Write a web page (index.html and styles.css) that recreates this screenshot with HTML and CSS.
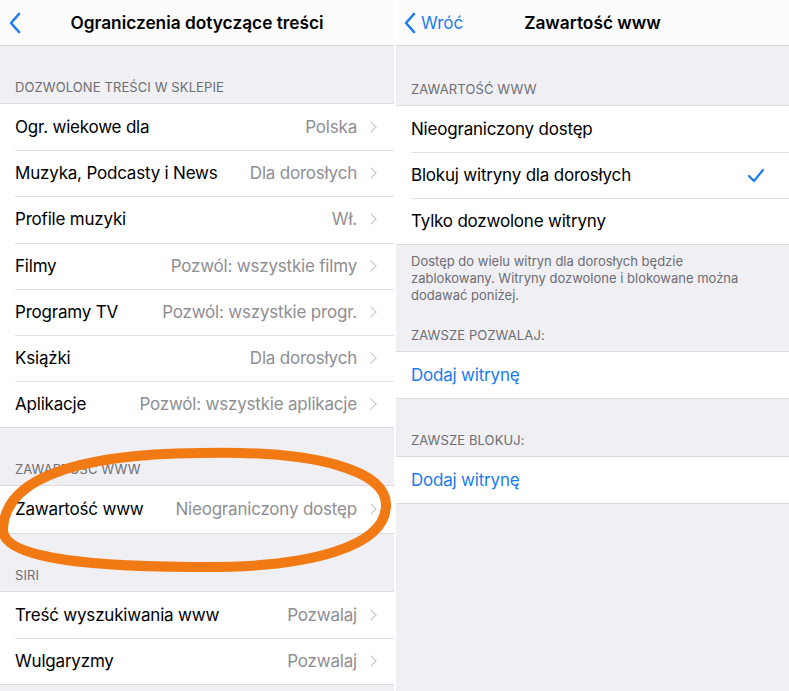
FILE: index.html
```html
<!DOCTYPE html>
<html lang="pl">
<head>
<meta charset="utf-8">
<link rel="stylesheet" href="styles.css">
</head>
<body>
<div class="screens">
  <section class="panel left">
    <header class="nav">
      <svg class="back" width="12" height="22" viewBox="0 0 12 22"><path d="M10 2 L2 11 L10 20" fill="none" stroke="#1a7cf0" stroke-width="2.6" stroke-linecap="round" stroke-linejoin="round"/></svg>
      <h1 class="title">Ograniczenia dotyczące treści</h1>
    </header>
    <div class="hdr">DOZWOLONE TREŚCI W SKLEPIE</div>
    <ul class="list">
      <li class="row"><span class="label">Ogr. wiekowe dla</span><span class="value">Polska</span><span class="chev"></span></li>
      <li class="row"><span class="label">Muzyka, Podcasty i News</span><span class="value">Dla dorosłych</span><span class="chev"></span></li>
      <li class="row"><span class="label">Profile muzyki</span><span class="value">Wł.</span><span class="chev"></span></li>
      <li class="row"><span class="label">Filmy</span><span class="value">Pozwól: wszystkie filmy</span><span class="chev"></span></li>
      <li class="row"><span class="label">Programy TV</span><span class="value">Pozwól: wszystkie progr.</span><span class="chev"></span></li>
      <li class="row"><span class="label">Książki</span><span class="value">Dla dorosłych</span><span class="chev"></span></li>
      <li class="row"><span class="label">Aplikacje</span><span class="value">Pozwól: wszystkie aplikacje</span><span class="chev"></span></li>
    </ul>
    <div class="hdr">ZAWARTOŚĆ WWW</div>
    <ul class="list">
      <li class="row"><span class="label">Zawartość www</span><span class="value">Nieograniczony dostęp</span><span class="chev"></span></li>
    </ul>
    <div class="hdr">SIRI</div>
    <ul class="list">
      <li class="row"><span class="label">Treść wyszukiwania www</span><span class="value">Pozwalaj</span><span class="chev"></span></li>
      <li class="row"><span class="label">Wulgaryzmy</span><span class="value">Pozwalaj</span><span class="chev"></span></li>
    </ul>
    <svg class="circle" width="400" height="140" viewBox="0 0 400 140"><path d="M3 85 C4 36 70 9 200 8 C318 5 386 26 386 60 C386 100 315 124 190 122 C70 121 3 110 3 85 Z" fill="none" stroke="#f27a14" stroke-width="10"/></svg>
  </section>
  <section class="panel right">
    <header class="nav">
      <span class="backlink"><svg class="back" width="12" height="22" viewBox="0 0 12 22"><path d="M10 2 L2 11 L10 20" fill="none" stroke="#1a7cf0" stroke-width="2.6" stroke-linecap="round" stroke-linejoin="round"/></svg><span class="backtxt">Wróć</span></span>
      <h1 class="title">Zawartość www</h1>
    </header>
    <div class="hdr tall">ZAWARTOŚĆ WWW</div>
    <ul class="list">
      <li class="row"><span class="label">Nieograniczony dostęp</span></li>
      <li class="row"><span class="label">Blokuj witryny dla dorosłych</span><svg class="check" width="18" height="15" viewBox="0 0 18 15"><path d="M2 8 L7 13 L16 2" fill="none" stroke="#1a7cf0" stroke-width="2.2" stroke-linecap="round" stroke-linejoin="round"/></svg></li>
      <li class="row"><span class="label">Tylko dozwolone witryny</span></li>
    </ul>
    <p class="foot">Dostęp do wielu witryn dla dorosłych będzie zablokowany. Witryny dozwolone i blokowane można dodawać poniżej.</p>
    <div class="hdr short">ZAWSZE POZWALAJ:</div>
    <ul class="list">
      <li class="row"><span class="label link">Dodaj witrynę</span></li>
    </ul>
    <div class="hdr">ZAWSZE BLOKUJ:</div>
    <ul class="list">
      <li class="row"><span class="label link">Dodaj witrynę</span></li>
    </ul>
  </section>
</div>
</body>
</html>
```

FILE: styles.css
```css
* { box-sizing: border-box; }
html, body { margin: 0; padding: 0; background: #ffffff; }
body { font-family: Inter, "Noto Sans", "Liberation Sans", sans-serif; color: #000; }

.screens {
  display: flex;
  gap: 2px;
  width: 789px;
  height: 691px;
  overflow: hidden;
}
.panel {
  position: relative;
  background: #efeff4;
  display: flex;
  flex-direction: column;
  height: 691px;
}
.panel.left { width: 394px; }
.panel.right { width: 393px; }

.nav {
  position: relative;
  height: 46px;
  background: #fcfcfc;
  border-bottom: 1px solid #d9d9dd;
  display: flex;
  align-items: center;
  justify-content: center;
  flex-shrink: 0;
}
.nav .title {
  margin: 0;
  font-size: 17.3px;
  font-weight: 600;
  letter-spacing: 0;
}
.nav .back { display: block; }
.left .nav > .back {
  position: absolute;
  left: 9px;
  top: 12px;
}
.backlink {
  position: absolute;
  left: 8px;
  top: 12px;
  display: flex;
  align-items: center;
  gap: 5px;
  color: #1a7cf0;
  font-size: 17px;
}

.hdr {
  height: 57px;
  display: flex;
  align-items: flex-end;
  padding: 0 15px 8px;
  font-size: 13px;
  color: #6d6d72;
  letter-spacing: 0.1px;
  flex-shrink: 0;
}
.hdr.tall { height: 59px; }
.hdr.short { height: 47px; }

.list {
  list-style: none;
  margin: 0;
  padding: 0;
  background: #fff;
  border-top: 1px solid #dcdce0;
  border-bottom: 1px solid #dcdce0;
  flex-shrink: 0;
}
.row {
  height: 46px;
  display: flex;
  align-items: center;
  padding-left: 15px;
  padding-right: 15px;
  position: relative;
  font-size: 17px;
  letter-spacing: -0.2px;
}
.row + .row::before {
  content: "";
  position: absolute;
  left: 15px;
  right: 0;
  top: 0;
  border-top: 1px solid #e2e2e6;
}
.left .row { height: 46.2px; }
.label { flex: 1; white-space: nowrap; }
.value { color: #8e8e93; white-space: nowrap; }
.chev {
  width: 8px;
  height: 8px;
  border-right: 1.7px solid #c4c4c9;
  border-top: 1.7px solid #c4c4c9;
  transform: rotate(45deg);
  margin-left: 10px;
  margin-right: 4px;
}
.link { color: #1a7cf0; }
.check { margin-right: 9px; }

.foot {
  margin: 0;
  padding: 8px 30px 0 15px;
  font-size: 13px;
  line-height: 17px;
  color: #6d6d72;
}

.circle {
  position: absolute;
  left: 0;
  top: 445px;
  pointer-events: none;
}
```
